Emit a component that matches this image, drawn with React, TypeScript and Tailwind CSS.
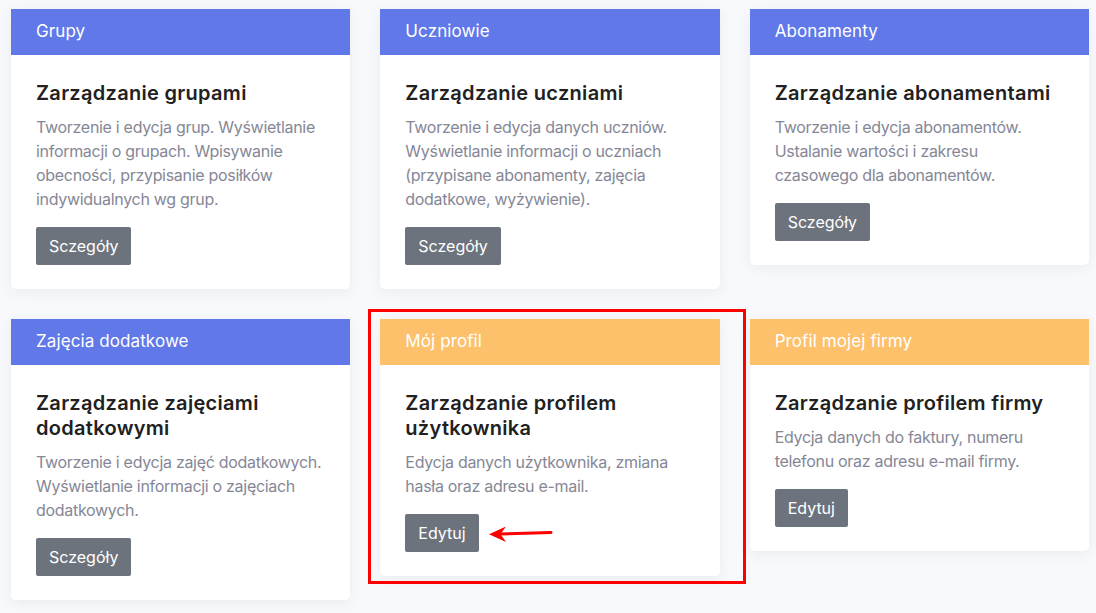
import React from "react";

type CardProps = {
  header: string;
  color: "blue" | "orange";
  title: string;
  text: string;
  button: string;
  highlight?: boolean;
};

const cards: CardProps[] = [
  {
    header: "Grupy",
    color: "blue",
    title: "Zarządzanie grupami",
    text: "Tworzenie i edycja grup. Wyświetlanie informacji o grupach. Wpisywanie obecności, przypisanie posiłków indywidualnych wg grup.",
    button: "Sczegóły",
  },
  {
    header: "Uczniowie",
    color: "blue",
    title: "Zarządzanie uczniami",
    text: "Tworzenie i edycja danych uczniów. Wyświetlanie informacji o uczniach (przypisane abonamenty, zajęcia dodatkowe, wyżywienie).",
    button: "Sczegóły",
  },
  {
    header: "Abonamenty",
    color: "blue",
    title: "Zarządzanie abonamentami",
    text: "Tworzenie i edycja abonamentów. Ustalanie wartości i zakresu czasowego dla abonamentów.",
    button: "Sczegóły",
  },
  {
    header: "Zajęcia dodatkowe",
    color: "blue",
    title: "Zarządzanie zajęciami dodatkowymi",
    text: "Tworzenie i edycja zajęć dodatkowych. Wyświetlanie informacji o zajęciach dodatkowych.",
    button: "Sczegóły",
  },
  {
    header: "Mój profil",
    color: "orange",
    title: "Zarządzanie profilem użytkownika",
    text: "Edycja danych użytkownika, zmiana hasła oraz adresu e-mail.",
    button: "Edytuj",
    highlight: true,
  },
  {
    header: "Profil mojej firmy",
    color: "orange",
    title: "Zarządzanie profilem firmy",
    text: "Edycja danych do faktury, numeru telefonu oraz adresu e-mail firmy.",
    button: "Edytuj",
  },
];

function Card({ header, color, title, text, button, highlight }: CardProps) {
  return (
    <div className="relative">
      <div className="bg-white rounded-b-[5px] shadow-[0_3px_14px_rgba(58,59,69,0.07)]">
        <div
          className={
            (color === "blue" ? "bg-[#6078e8]" : "bg-[#fdc16b]") +
            " h-[46px] px-[25px] flex items-center text-white text-[17px] tracking-[0.1px]"
          }
        >
          {header}
        </div>
        <div className="px-[25px] pt-[26px] pb-[24px]">
          <h3 className="text-[20px] leading-[25px] font-semibold tracking-[0.3px] text-[#212121] mb-[9px]">
            {title}
          </h3>
          <p className="text-[16px] leading-[24px] tracking-[-0.3px] text-[#858796]">{text}</p>
          <button className="mt-[16px] h-[38px] px-[13px] bg-[#6c737c] text-white text-[16px] rounded-[2px]">
            {button}
          </button>
        </div>
      </div>
      {highlight && (
        <>
          <div className="absolute -left-[12px] -top-[10px] -right-[26px] -bottom-[8px] border-[3px] border-[#ff0000] pointer-events-none" />
          <svg
            className="absolute left-[105px] top-[203px]"
            width="70"
            height="24"
            viewBox="0 0 70 24"
          >
            <line x1="14" y1="12" x2="66" y2="10.5" stroke="#ff0000" strokeWidth="3" strokeLinecap="round" />
            <polygon points="4,12.3 21,4.5 15.5,12 21,20" fill="#ff0000" />
          </svg>
        </>
      )}
    </div>
  );
}

export default function App() {
  return (
    <div
      className="min-h-screen bg-[#f8f9fc] pt-[9px]"
      style={{ fontFamily: "Inter, 'Noto Sans', sans-serif" }}
    >
      <div className="ml-[11px] w-[1078px] grid grid-cols-3 gap-[30px] items-start">
        {cards.map((c) => (
          <Card key={c.header} {...c} />
        ))}
      </div>
    </div>
  );
}
